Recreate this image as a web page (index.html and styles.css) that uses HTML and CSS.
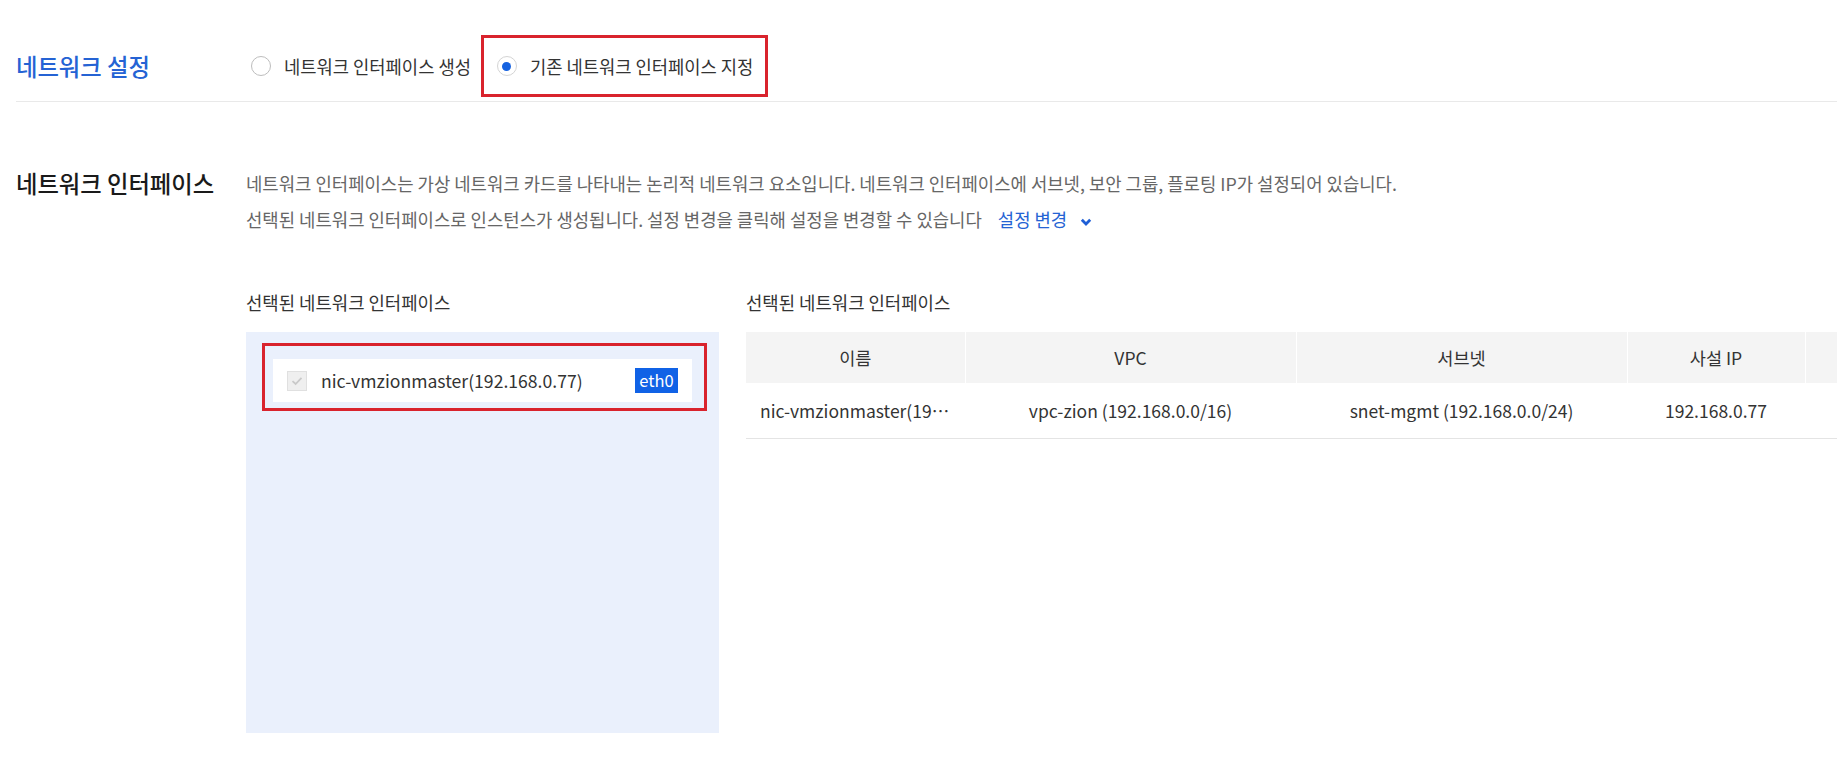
FILE: index.html
```html
<!DOCTYPE html>
<html>
<head>
  <title>네트워크 설정</title>
  <link rel="stylesheet" href="styles.css">
</head>
<body>
  <!-- 네트워크 설정 -->
  <section class="setting-row">
    <h2 class="section-title blue">네트워크 설정</h2>
    <div class="radio-group">
      <label class="radio-option first"><span class="radio"></span>네트워크 인터페이스 생성</label>
      <label class="radio-option marked"><span class="radio checked"></span>기존 네트워크 인터페이스 지정</label>
    </div>
  </section>

  <!-- 네트워크 인터페이스 -->
  <section class="nic-section">
    <h2 class="section-title">네트워크 인터페이스</h2>
    <div class="nic-body">
      <p class="desc">네트워크 인터페이스는 가상 네트워크 카드를 나타내는 논리적 네트워크 요소입니다. 네트워크 인터페이스에 서브넷, 보안 그룹, 플로팅 IP가 설정되어 있습니다.</p>
      <p class="desc">선택된 네트워크 인터페이스로 인스턴스가 생성됩니다. 설정 변경을 클릭해 설정을 변경할 수 있습니다
        <a class="link" href="#">설정 변경
          <svg class="chevron" width="12" height="9" viewBox="0 0 12 9"><path d="M1.8 1.8 L6 6 L10.2 1.8" fill="none" stroke="#1f5fd6" stroke-width="2.8"/></svg>
        </a>
      </p>

      <div class="nic-lists">
        <div class="nic-left">
          <div class="list-label">선택된 네트워크 인터페이스</div>
          <div class="nic-panel">
            <div class="mark-box">
              <div class="nic-item">
                <span class="checkbox">
                  <svg width="14" height="14" viewBox="0 0 14 14"><path d="M2.5 7.2 L5.6 10 L11.5 3.8" fill="none" stroke="#c9c9c9" stroke-width="1.8"/></svg>
                </span>
                <span class="nic-name">nic-vmzionmaster(192.168.0.77)</span>
                <span class="badge">eth0</span>
              </div>
            </div>
          </div>
        </div>

        <div class="nic-right">
          <div class="list-label">선택된 네트워크 인터페이스</div>
          <table class="nic-table">
            <colgroup>
              <col class="c-name"><col class="c-vpc"><col class="c-subnet"><col class="c-ip"><col class="c-extra">
            </colgroup>
            <thead>
              <tr>
                <th>이름</th>
                <th>VPC</th>
                <th>서브넷</th>
                <th>사설 IP</th>
                <th></th>
              </tr>
            </thead>
            <tbody>
              <tr>
                <td>nic-vmzionmaster(192.168.0.77)</td>
                <td>vpc-zion (192.168.0.0/16)</td>
                <td>snet-mgmt (192.168.0.0/24)</td>
                <td>192.168.0.77</td>
                <td></td>
              </tr>
            </tbody>
          </table>
        </div>
      </div>
    </div>
  </section>
</body>
</html>
```

FILE: styles.css
```css
body {
  margin: 0;
  padding-left: 16px;
  font-family: "Noto Sans CJK KR", sans-serif;
  color: #333;
  background: #fff;
  overflow: hidden;
}

.section-title {
  width: 230px;
  flex-shrink: 0;
  margin: 0;
  font-size: 23.3px;
  font-weight: 500;
  line-height: 36px;
  color: #1a1a1a;
}

.section-title.blue {
  color: #2563d4;
}

/* top row */
.setting-row {
  display: flex;
  align-items: center;
  padding: 35px 0 4px;
  border-bottom: 1px solid #e9e9e9;
}

.radio-group {
  display: flex;
  align-items: center;
}

.radio-option {
  display: flex;
  align-items: center;
  gap: 13px;
  height: 56px;
  font-size: 17.7px;
  color: #333;
}

.radio-option.first {
  margin-left: 5px;
}

.radio-option.marked {
  margin-left: 10px;
  padding: 0 12px 0 13px;
  border: 3px solid #d9232d;
}

.radio {
  width: 18px;
  height: 18px;
  border: 1px solid #bdbdbd;
  border-radius: 50%;
  background: #fff;
  display: flex;
  align-items: center;
  justify-content: center;
}

.radio.checked {
  border-color: #d4d4d4;
}

.radio.checked::after {
  content: '';
  width: 9px;
  height: 9px;
  border-radius: 50%;
  background: #1662e0;
}

/* nic section */
.nic-section {
  display: flex;
  margin-top: 63px;
}

.nic-body {
  flex: 1;
  min-width: 0;
}

.desc {
  margin: 0;
  font-size: 17.8px;
  line-height: 36px;
  color: #666;
  white-space: nowrap;
}

.link {
  margin-left: 12px;
  color: #2563d4;
  text-decoration: none;
}

.chevron {
  margin-left: 9px;
  vertical-align: 0;
}

.nic-lists {
  display: flex;
  gap: 27px;
  margin-top: 54px;
}

.list-label {
  font-size: 17.8px;
  line-height: 22px;
  color: #333;
  margin-bottom: 19px;
}

.nic-left {
  width: 473px;
  flex-shrink: 0;
}

.nic-panel {
  height: 401px;
  box-sizing: border-box;
  padding: 11px 12px 0 16px;
  background: #eaf0fc;
}

.mark-box {
  border: 3px solid #d9232d;
  padding: 13px 12px 6px 8px;
}

.nic-item {
  display: flex;
  align-items: center;
  height: 43px;
  padding: 0 14px;
  background: #fff;
}

.checkbox {
  width: 18px;
  height: 18px;
  border: 1px solid #e0e0e0;
  background: #efefef;
  display: flex;
  align-items: center;
  justify-content: center;
}

.nic-name {
  flex: 1;
  margin-left: 14px;
  font-size: 17.6px;
  color: #333;
}

.badge {
  width: 43px;
  height: 25px;
  line-height: 25px;
  text-align: center;
  font-size: 16.5px;
  color: #fff;
  background: #1062e6;
}

.nic-right {
  flex: 1;
  min-width: 0;
  overflow: hidden;
}

.nic-table {
  table-layout: fixed;
  width: 1259px;
  border-collapse: collapse;
  margin-top: 1px;
}

.c-name { width: 219px; }
.c-vpc { width: 331px; }
.c-subnet { width: 331px; }
.c-ip { width: 178px; }
.c-extra { width: 200px; }

.nic-table th {
  height: 51px;
  padding: 0 14px;
  background: #f4f4f4;
  border-right: 1px solid #fff;
  font-size: 17.5px;
  font-weight: 400;
  color: #333;
  text-align: center;
}

.nic-table td {
  height: 55px;
  padding: 0 14px;
  border-bottom: 1px solid #e4e4e4;
  font-size: 17.5px;
  color: #333;
  text-align: center;
  white-space: nowrap;
  overflow: hidden;
  text-overflow: ellipsis;
}
```
